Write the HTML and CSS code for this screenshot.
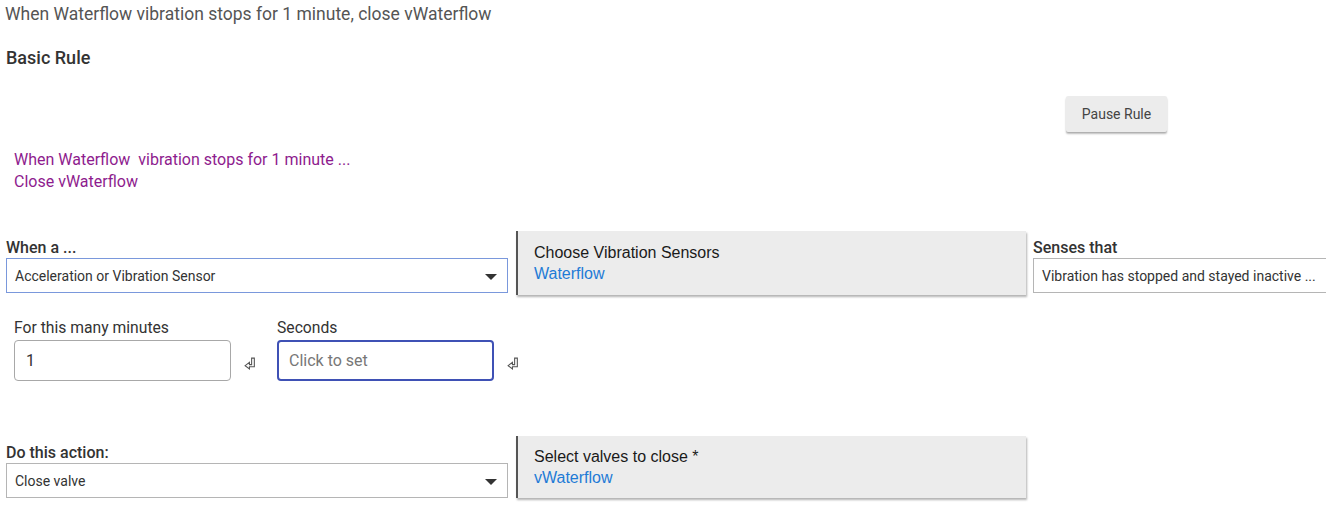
FILE: index.html
```html
<!DOCTYPE html>
<html>
<head>
<meta charset="utf-8">
<link rel="stylesheet" href="styles.css">
</head>
<body>
<div class="page">
  <div class="title">When Waterflow vibration stops for 1 minute, close vWaterflow</div>
  <div class="heading">Basic Rule</div>
  <div class="btn-row">
    <button class="btn">Pause Rule</button>
  </div>
  <div class="desc">
    <div>When Waterflow&nbsp; vibration stops for 1 minute ...</div>
    <div>Close vWaterflow</div>
  </div>

  <div class="row row-trigger">
    <div class="field">
      <div class="label">When a ...</div>
      <div class="select focused">
        <span>Acceleration or Vibration Sensor</span>
        <span class="caret"></span>
      </div>
    </div>
    <div class="card">
      <div class="card-title">Choose Vibration Sensors</div>
      <div class="card-value">Waterflow</div>
    </div>
    <div class="field">
      <div class="label">Senses that</div>
      <div class="select wide">
        <span>Vibration has stopped and stayed inactive ...</span>
      </div>
    </div>
  </div>

  <div class="row-inputs">
    <div class="num-field">
      <div class="num-label">For this many minutes</div>
      <div class="num-line">
        <div class="input">1</div>
        <svg class="ret" viewBox="0 0 11 12" width="12" height="13"><path d="M7 1 H9.5 V9 H5 V11 L1 8 L5 5 V7 H7 Z" fill="none" stroke="#555" stroke-width="1"/></svg>
      </div>
    </div>
    <div class="num-field">
      <div class="num-label">Seconds</div>
      <div class="num-line">
        <div class="input active placeholder">Click to set</div>
        <svg class="ret" viewBox="0 0 11 12" width="12" height="13"><path d="M7 1 H9.5 V9 H5 V11 L1 8 L5 5 V7 H7 Z" fill="none" stroke="#555" stroke-width="1"/></svg>
      </div>
    </div>
  </div>

  <div class="row row-action">
    <div class="field">
      <div class="label">Do this action:</div>
      <div class="select">
        <span>Close valve</span>
        <span class="caret"></span>
      </div>
    </div>
    <div class="card">
      <div class="card-title">Select valves to close *</div>
      <div class="card-value">vWaterflow</div>
    </div>
  </div>
</div>
</body>
</html>
```
FILE: styles.css
```css
html, body {
  margin: 0;
  padding: 0;
  background: #fff;
  overflow: hidden;
}
body {
  font-family: Roboto, "Liberation Sans", sans-serif;
  color: #333;
}
.page {
  width: 1326px;
  height: 517px;
  position: relative;
}
.title {
  font-size: 17.5px;
  color: #555;
  line-height: 20px;
  padding: 4px 0 0 5px;
}
.heading {
  font-size: 18px;
  font-weight: 500;
  color: #333;
  line-height: 22px;
  padding: 23px 0 0 6px;
}
.btn-row {
  display: flex;
  justify-content: flex-end;
  padding-right: 159px;
  margin-top: 27px;
}
.btn {
  width: 101px;
  height: 36px;
  border: none;
  border-radius: 2px;
  background: #ececec;
  box-shadow: 0 2px 2px rgba(0,0,0,0.25), 0 1px 1px rgba(0,0,0,0.1);
  font-family: Roboto, "Liberation Sans", sans-serif;
  font-size: 14px;
  color: #444;
  padding: 0;
}
.desc {
  color: #8e1c8e;
  font-size: 16px;
  line-height: 22px;
  padding: 17px 0 0 14px;
}
.row {
  display: grid;
  grid-template-columns: 502px 510px 1fr;
  column-gap: 8px;
  padding-left: 6px;
}
.row-trigger {
  margin-top: 38px;
}
.row-trigger > .field:last-child {
  margin-left: -1px;
}
.field {
  display: flex;
  flex-direction: column;
  justify-content: flex-end;
}
.label {
  font-size: 16px;
  font-weight: 500;
  color: #333;
  line-height: 18px;
  margin-bottom: 1px;
}
.select {
  height: 35px;
  box-sizing: border-box;
  border: 1px solid #b5b5b5;
  display: flex;
  align-items: center;
  justify-content: space-between;
  padding: 0 10px 0 8px;
  font-size: 14px;
  color: #333;
  white-space: nowrap;
  overflow: hidden;
}
.select.focused {
  border-color: #7a98dc;
}
.select.wide {
  border-right: none;
}
.row-trigger .field .select {
  margin-bottom: 2px;
}
.caret {
  width: 0;
  height: 0;
  border-left: 6px solid transparent;
  border-right: 6px solid transparent;
  border-top: 6px solid #333;
  margin-top: 2px;
}
.card {
  background: #ececec;
  border-left: 2px solid #555;
  box-shadow: 1px 2px 2px rgba(0,0,0,0.3);
  padding: 10px 16px 12px 16px;
  font-family: "Liberation Sans", Arial, sans-serif;
  font-size: 16px;
  line-height: 21px;
}
.card-title {
  color: #1a1a1a;
}
.card-value {
  color: #1e7bd6;
}
.row-trigger .card {
  height: 42px;
  padding-top: 11px;
  padding-bottom: 11px;
}
.row-inputs {
  display: flex;
  gap: 21px;
  padding-left: 14px;
  margin-top: 23px;
}
.num-label {
  font-size: 15.7px;
  line-height: 20px;
  color: #333;
  margin-bottom: 2px;
}
.num-line {
  display: flex;
  align-items: center;
}
.input {
  width: 217px;
  height: 41px;
  box-sizing: border-box;
  border: 1px solid #a8a8a8;
  border-radius: 4px;
  padding-left: 11px;
  display: flex;
  align-items: center;
  font-size: 16px;
  color: #333;
}
.input.active {
  border: 2px solid #3f51b5;
  width: 217px;
  padding-left: 10px;
}
.input.placeholder {
  color: #777;
}
.ret {
  margin-left: 13px;
  margin-top: 6px;
}
.row-action {
  margin-top: 55px;
}
.row-action .card {
  height: 40px;
}
```
